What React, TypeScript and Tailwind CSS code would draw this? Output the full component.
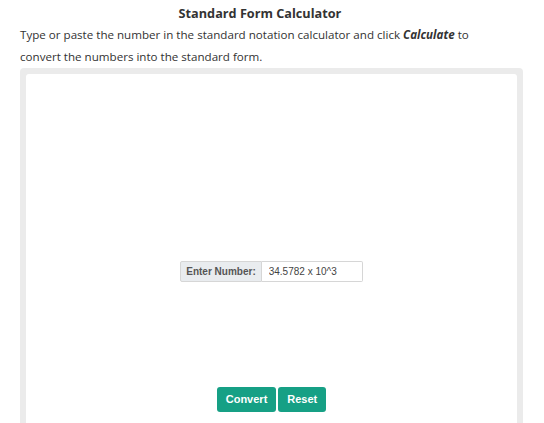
import React from 'react';

export default function App() {
  return (
    <div className="w-[544px] h-[423px] overflow-hidden bg-white font-['Open_Sans',sans-serif] text-[#333]">
      <div className="px-5">
        <h1 className="pr-6 text-center text-[12.7px] font-bold leading-[20px] pt-[3px]">Standard Form Calculator</h1>
        <p className="text-[11.6px] leading-[22px] text-[#333] mt-[1px]">
          Type or paste the number in the standard notation calculator and click{' '}
          <b><i>Calculate</i></b> to
          <br />
          convert the numbers into the standard form.
        </p>
        <div className="mt-0 w-[503px] h-[400px] bg-[#ebebeb] rounded-[4px] p-[6px]">
          <div className="h-full bg-white rounded-[3px] flex flex-col items-center font-['Liberation_Sans',sans-serif]">
            <div className="mt-[187px] flex items-stretch h-[21px]">
              <span className="flex items-center px-[5px] bg-[#e9ecef] border border-[#d6d6d6] rounded-l-[2px] text-[10px] font-bold text-[#555]">
                Enter Number:
              </span>
              <input
                defaultValue="34.5782 x 10^3"
                className="w-[101px] border border-l-0 border-[#d6d6d6] rounded-r-[2px] px-[7px] text-[10px] text-[#444] outline-none"
              />
            </div>
            <div className="mt-[105px] flex gap-[2px]">
              <button className="h-[25px] px-[9px] bg-[#16a085] text-white text-[11px] font-bold rounded-[3px]">Convert</button>
              <button className="h-[25px] px-[9px] bg-[#16a085] text-white text-[11px] font-bold rounded-[3px]">Reset</button>
            </div>
          </div>
        </div>
      </div>
    </div>
  );
}
